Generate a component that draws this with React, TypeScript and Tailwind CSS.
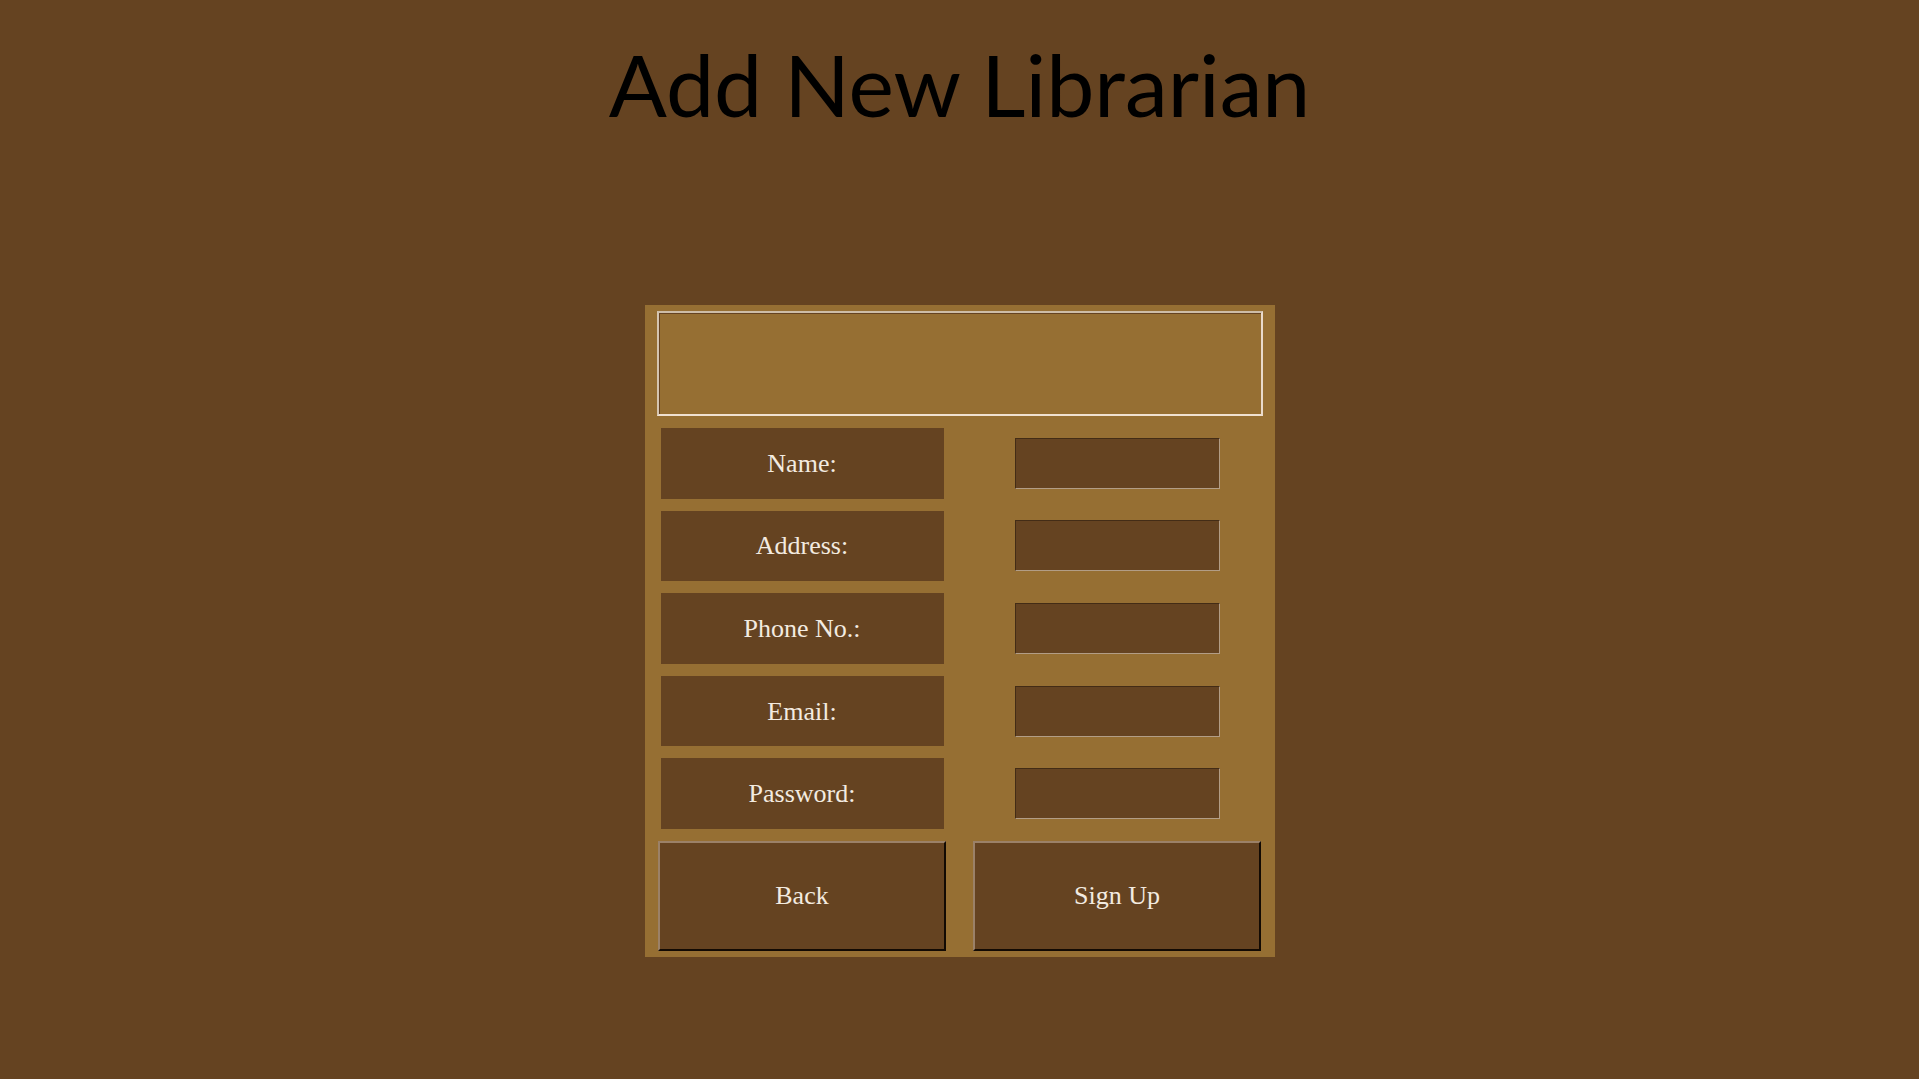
import React from "react";

const fields = [
  { id: "name", label: "Name:", type: "text" },
  { id: "address", label: "Address:", type: "text" },
  { id: "phone", label: "Phone No.:", type: "tel" },
  { id: "email", label: "Email:", type: "email" },
  { id: "password", label: "Password:", type: "password" },
];

const buttonClass =
  "mx-auto h-[110px] w-[288px] border-2 border-t-[#9b8168] border-l-[#9b8168] border-r-[#120a03] border-b-[#120a03] bg-[#654321] text-center";

export default function App() {
  return (
    <main className="flex min-h-screen flex-col items-center bg-[#654321] pb-16">
      <h1 className="mt-7 text-center font-['Papyrus','Lato',sans-serif] text-[86px] leading-[112px] text-black">
        Add New Librarian
      </h1>

      <form
        onSubmit={(event) => event.preventDefault()}
        className="mt-[165px] flex w-full max-w-[630px] flex-col gap-3 bg-[#966f33] py-1.5 font-['Gabriola','Liberation_Serif',serif] text-[26px] leading-8 text-[#f3ebe0]"
      >
        <div
          role="status"
          className="mx-3 h-[105px] border-2 border-t-[#cdbda7] border-l-[#d5c5b1] border-r-[#eadbcb] border-b-[#f0e1d1] shadow-[inset_1px_1px_0_#654321]"
        />

        <div className="grid h-[401px] auto-rows-fr gap-3">
          {fields.map((field) => (
            <div key={field.id} className="grid grid-cols-2 items-center">
              <label
                htmlFor={field.id}
                className="mx-auto flex h-full w-[283px] items-center justify-center bg-[#654321] pt-px"
              >
                {field.label}
              </label>
              <input
                id={field.id}
                name={field.id}
                type={field.type}
                className="mx-auto h-[51px] w-[205px] border border-t-[#432c16] border-l-[#432c16] border-r-[#b29d86] border-b-[#b29d86] bg-[#654321] px-1 outline-none"
              />
            </div>
          ))}
        </div>

        <div className="grid grid-cols-2">
          <button type="button" className={buttonClass}>
            Back
          </button>
          <button type="submit" className={buttonClass}>
            Sign Up
          </button>
        </div>
      </form>
    </main>
  );
}
